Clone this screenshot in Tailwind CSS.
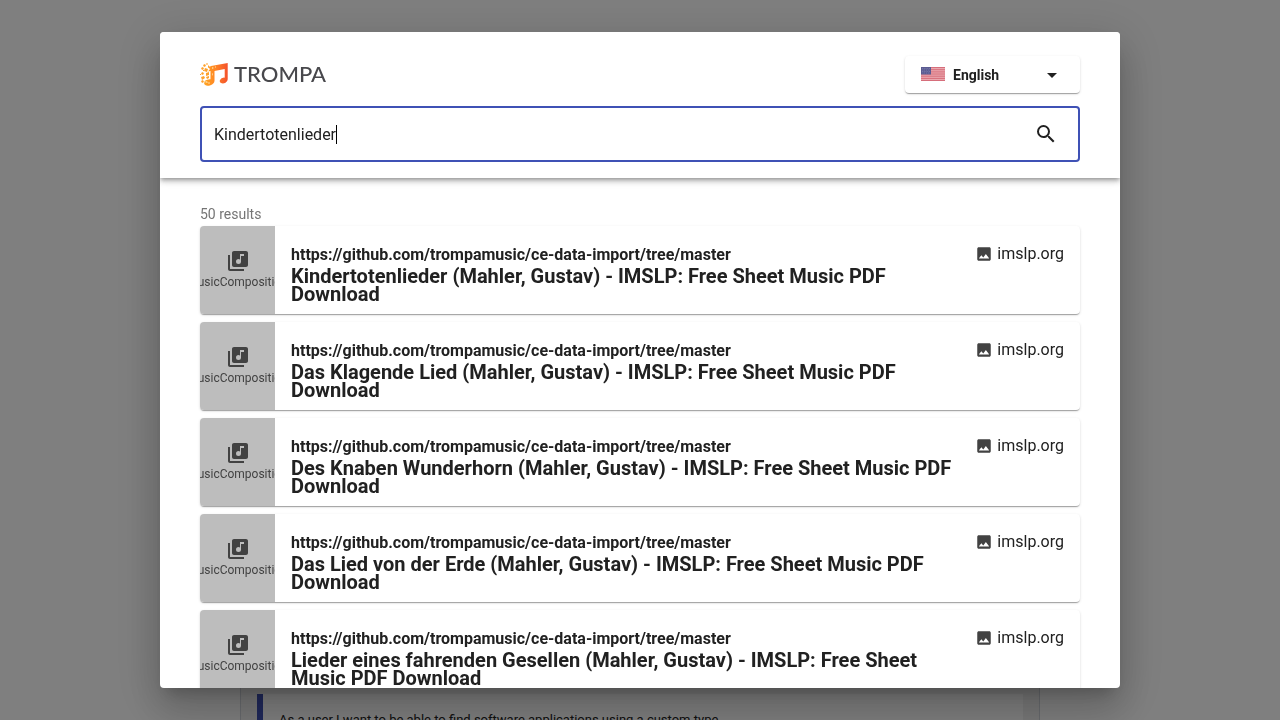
<!DOCTYPE html>
<html lang="en">
<head>
<meta charset="utf-8">
<meta name="viewport" content="width=device-width, initial-scale=1">
<title>TROMPA search</title>
<script src="https://cdn.jsdelivr.net/npm/@tailwindcss/browser@4"></script>
</head>
<body class="relative h-screen overflow-hidden bg-white font-[Roboto,sans-serif] text-base text-[#212121]">

<!-- Page behind the dialog -->
<main class="mx-auto flex h-full w-full max-w-[800px] flex-col justify-end">
  <div class="border-x border-gray-300 bg-[#f2f2f2] px-4 pt-4">
    <section class="flex h-[26px] border-l-6 border-[#3f51b5] bg-white px-4 pt-4">
      <p class="text-[13px] leading-5 whitespace-nowrap">As a user I want to be able to find software applications using a custom type</p>
    </section>
  </div>
</main>

<div class="fixed inset-0 flex justify-center bg-black/50 p-8">
  <div role="dialog" aria-label="Search" class="flex w-full max-w-[960px] flex-col overflow-hidden rounded bg-white shadow-[0_11px_15px_-7px_rgba(0,0,0,0.2),0_24px_38px_3px_rgba(0,0,0,0.14),0_9px_46px_8px_rgba(0,0,0,0.12)]">

    <header class="relative z-10 flex shrink-0 flex-col gap-3 bg-white px-10 pt-6 pb-4 shadow-[0_2px_4px_-1px_rgba(0,0,0,0.3),0_4px_5px_0_rgba(0,0,0,0.14),0_1px_10px_0_rgba(0,0,0,0.12)]">
      <div class="flex h-[38px] items-start justify-between">
        <a href="#" class="flex items-center gap-1.5 pt-1.5" aria-label="TROMPA">
          <svg class="h-6 w-7" viewBox="0 0 28 24" aria-hidden="true">
            <defs><linearGradient id="flame" x1="0" x2="1" y1="0" y2="0"><stop offset="0" stop-color="#ffa51f"/><stop offset=".5" stop-color="#ff8426"/><stop offset="1" stop-color="#f4512c"/></linearGradient></defs>
            <path fill="url(#flame)" d="M11 4 27.700 1V17.200Q27.700 19.500 25.500 20.700 23 22 21 21 19.200 20 20 18 21 15.800 24 15.600L24.700 15.700V7L14.500 9V19Q14 22 10.500 23.200 7 24.400 5.200 23 3.500 21 5 18.800 7 17 10.500 17.200V9L8 9.500 10 7 8.500 5.500Z"/>
            <g fill="#ffa12b"><path d="m4 2 2 1-1 2-2-1zM7 1l1 1-1 1-1-1zM1 6l2-1 1 2-2 1zM5 6l3 1-1 3-3-1zM8 3l2 2-2 1zM2 10l2 1-1 2-2-1zM6 11l3-1v3l-3 1zM1 15l3-1 1 2-3 2zM0 12h1v1H0zM6 15l3-1v2l-2 1zM1 19l2-1 1 2-2 1zM3 8h1v1H3zM4 21l3 1-2 1z"/></g>
            <g fill="#ffdca0"><path d="m6 19 2 1-1 1-2-1zM9 20l1 1-1 1-1-1zM12 5l2 1-2 1zM15 4l1 1-1 1zM12 11l1 1-1 2z"/></g>
          </svg>
          <span class="font-[Lato,sans-serif] text-[22px] leading-6 font-medium text-[#48484c]">TROMPA</span>
        </a>
        <button type="button" class="flex h-[37px] w-[175px] items-center gap-2 rounded bg-white px-4 text-sm font-bold shadow-[0_2px_1px_-1px_rgba(0,0,0,0.2),0_1px_1px_0_rgba(0,0,0,0.14),0_1px_3px_0_rgba(0,0,0,0.12)]">
          <svg class="mb-0.5 h-[14px] w-6" viewBox="0 0 24 14" aria-hidden="true">
            <path fill="#eba7ae" d="M0 0h24v14H0z"/>
            <path stroke="#d0606d" d="M0 .5h24M0 2.700h24M0 4.900h24M0 7h24M0 9.200h24M0 11.400h24M0 13.500h24" stroke-width=".8"/>
            <path fill="#5a5b91" d="M0 0h10v7.500H0z"/>
            <path stroke="#8b8cba" stroke-width=".7" stroke-dasharray=".8 1" d="M1 1.500h8.500M1.500 3h7.500M1 4.500h8.500M1.500 6h7.500"/>
          </svg>
          <span>English</span>
          <svg class="ml-auto size-6" viewBox="0 0 24 24" fill="currentColor" aria-hidden="true"><path d="m7 10 5 5 5-5z"/></svg>
        </button>
      </div>
      <form class="flex h-14 items-center rounded border-2 border-[#3f51b5] px-3" onsubmit="return false">
        <div class="flex grow items-center pt-0.5">
          <input id="q" type="text" aria-label="Search" value="Kindertotenlieder" class="[field-sizing:content] caret-transparent outline-none">
          <span class="mb-0.5 h-[19px] w-px bg-black" aria-hidden="true"></span>
        </div>
        <button type="submit" aria-label="Search" class="-mr-1 flex size-12 items-center justify-center">
          <svg class="size-6" viewBox="0 0 24 24" fill="currentColor" aria-hidden="true"><path d="M15.500 14h-.79l-.28-.27A6.471 6.471 0 0 0 16 9.500 6.500 6.500 0 1 0 9.500 16c1.610 0 3.090-.59 4.230-1.570l.27.28v.79l5 4.990L20.490 19l-4.990-5zm-6 0C7.010 14 5 11.990 5 9.500S7.010 5 9.500 5 14 7.010 14 9.500 11.990 14 9.500 14z"/></svg>
        </button>
      </form>
    </header>

    <section class="min-h-0 grow overflow-hidden px-10 pt-6">
      <p class="text-sm leading-6 text-[#757575]">50 results</p>
      <ul id="results" class="flex flex-col gap-2"></ul>
    </section>
  </div>
</div>

<template id="row">
  <li class="flex h-[88px] overflow-hidden rounded bg-white shadow-[0_2px_1px_-1px_rgba(0,0,0,0.2),0_1px_1px_0_rgba(0,0,0,0.14),0_1px_3px_0_rgba(0,0,0,0.12)]">
    <div class="flex w-[75px] shrink-0 flex-col items-center overflow-hidden bg-[#bdbdbd] pt-[23px] text-[#424242]">
      <svg class="size-6 shrink-0" viewBox="0 0 24 24" fill="currentColor" aria-hidden="true"><path d="M20 2H8c-1.100 0-2 .9-2 2v12c0 1.100.9 2 2 2h12c1.100 0 2-.9 2-2V4c0-1.100-.9-2-2-2zm-2 5h-3v5.500a2.500 2.500 0 1 1-2.500-2.500c.57 0 1.080.19 1.500.51V5h4v2zM4 6H2v14c0 1.100.9 2 2 2h14v-2H4V6z"/></svg>
      <span class="text-xs leading-[18px]">MusicComposition</span>
    </div>
    <div class="flex min-w-0 grow px-4 pt-4">
      <div class="min-w-0 flex-1 pt-px pr-2">
        <p class="leading-6 font-bold">https://github.com/trompamusic/ce-data-import/tree/master</p>
        <h2 class="text-xl leading-[18px] font-bold"></h2>
      </div>
      <a href="#" class="flex h-6 shrink-0 items-center gap-1">
        <svg class="size-[18px] text-[#424242]" viewBox="0 0 24 24" fill="currentColor" aria-hidden="true"><path d="M21 19V5c0-1.100-.9-2-2-2H5c-1.100 0-2 .9-2 2v14c0 1.100.9 2 2 2h14c1.100 0 2-.9 2-2zM8.500 13.500l2.500 3.010L14.500 12l4.500 6H5l3.500-4.500z"/></svg>
        <span>imslp.org</span>
      </a>
    </div>
  </li>
</template>
<script>
const titles = [
  'Kindertotenlieder (Mahler, Gustav) - IMSLP: Free Sheet Music PDF Download',
  'Das Klagende Lied (Mahler, Gustav) - IMSLP: Free Sheet Music PDF Download',
  'Des Knaben Wunderhorn (Mahler, Gustav) - IMSLP: Free Sheet Music PDF Download',
  'Das Lied von der Erde (Mahler, Gustav) - IMSLP: Free Sheet Music PDF Download',
  'Lieder eines fahrenden Gesellen (Mahler, Gustav) - IMSLP: Free Sheet Music PDF Download'
];
for (const title of titles) {
  const row = document.getElementById('row').content.cloneNode(true);
  row.querySelector('h2').textContent = title;
  document.getElementById('results').append(row);
}
</script>
</body>
</html>
